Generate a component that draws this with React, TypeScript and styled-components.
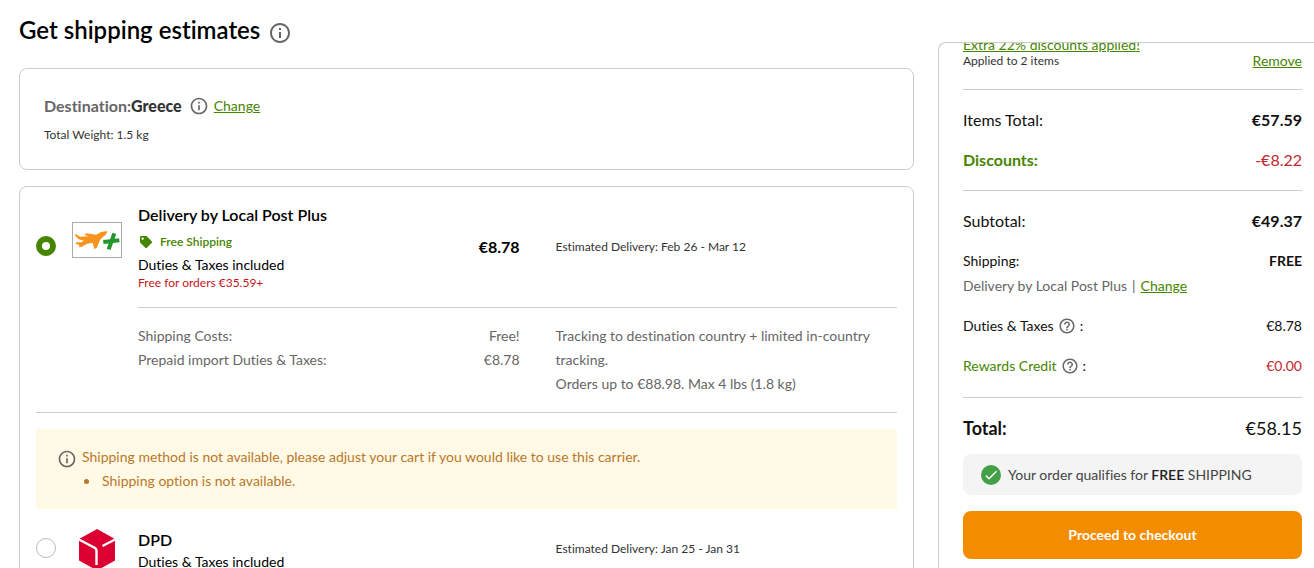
import React from "react";
import styled, { createGlobalStyle } from "styled-components";
import { MdInfoOutline, MdHelpOutline, MdCheck } from "react-icons/md";
import { FaTag } from "react-icons/fa";

const green = "#458500";
const line = "#cccccc";

const GlobalStyle = createGlobalStyle`
  *, *::before, *::after { box-sizing: border-box; }
  body {
    margin: 0;
    background: #fff;
    color: #111;
    font-family: Lato, "Liberation Sans", sans-serif;
    font-size: 14px;
    line-height: 20px;
    font-variant-ligatures: none;
  }
  h1, h2, p, ul, dl, dd, dt { margin: 0; padding: 0; font: inherit; font-variant-ligatures: none; }
`;

const Page = styled.div`
  display: grid;
  grid-template-columns: minmax(0, 1fr) 376px;
  gap: 24px;
  height: 100vh;
  padding-left: 19px;
  overflow: hidden;
`;

const Main = styled.main`
  display: flex;
  flex-direction: column;
  gap: 16px;
`;

const TitleBar = styled.header`
  display: flex;
  align-items: flex-end;
  gap: 8px;
  padding-bottom: 7px;
  height: 52px;
`;

const Title = styled.h1`
  && {
    font-size: 24px;
    line-height: 30px;
    font-weight: 600;
    color: #000;
  }
`;

const IconButton = styled.button<{ $size: number }>`
  display: inline-flex;
  flex: none;
  padding: 0;
  border: 0;
  background: none;
  color: #666;
  cursor: pointer;
  font-size: ${(p) => p.$size}px;
`;

const TextLink = styled.a`
  color: ${green};
  text-decoration: underline;
`;

const Card = styled.section`
  flex: none;
  border: 1px solid ${line};
  border-radius: 8px;
`;

const DestinationCard = styled(Card)`
  padding: 24px 24px 26px;
  display: flex;
  flex-direction: column;
  gap: 8px;
`;

const DestinationLine = styled.div`
  display: flex;
  align-items: center;
  line-height: 26px;
`;

const DestinationText = styled.p`
  && {
    font-size: 16px;
    font-weight: 700;
    color: #666;
    margin-right: 7px;
  }
  strong {
    color: #333;
  }
`;

const Change = styled(TextLink)`
  margin-left: 5px;
`;

const Small = styled.p`
  && {
    font-size: 12px;
    line-height: 16px;
    color: #333;
  }
`;

const MethodsCard = styled(Card)`
  padding: 15px 16px;
`;

const Method = styled.div`
  display: grid;
  grid-template-columns: 20px 16px 50px 16px minmax(0, 19fr) 36px minmax(0, 17fr);
  align-items: center;
`;

const Radio = styled.input`
  grid-column: 1;
  appearance: none;
  width: 20px;
  height: 20px;
  margin: 0 0 3px;
  border: 1px solid #bbb;
  border-radius: 50%;
  background: #fff;
  &:checked {
    border: 6px solid ${green};
  }
`;

const Logo = styled.span<{ $framed?: boolean }>`
  grid-column: 3;
  display: flex;
  justify-content: center;
  ${(p) => p.$framed && "border: 1px solid #aaa; margin-bottom: 14px;"}
`;

const Offer = styled.div`
  grid-column: 5;
  display: flex;
  justify-content: space-between;
  align-items: center;
`;

const Name = styled.label`
  display: block;
  font-size: 16px;
  line-height: 26px;
  font-weight: 600;
  color: #000;
`;

const FreeTag = styled.p`
  && {
    display: flex;
    align-items: center;
    gap: 8px;
    padding-left: 2px;
    font-size: 12px;
    line-height: 28px;
    font-weight: 600;
    color: ${green};
  }
`;

const Note = styled.p`
  && {
    line-height: 18px;
    color: #000;
  }
`;

const Threshold = styled.p`
  && {
    font-size: 12px;
    line-height: 18px;
    color: #c4161c;
  }
`;

const Price = styled.span`
  font-size: 16px;
  font-weight: 700;
  color: #000;
`;

const Estimate = styled(Small)`
  grid-column: 7;
`;

const Details = styled.div`
  display: grid;
  grid-template-columns: minmax(0, 19fr) minmax(0, 17fr);
  column-gap: 36px;
  margin: 15px 0 0 102px;
  padding: 16px 0;
  border-top: 1px solid ${line};
  color: #666;
  line-height: 24px;
`;

const Cost = styled.div`
  display: flex;
  justify-content: space-between;
`;

const Warning = styled.div`
  display: flex;
  margin-bottom: 18px;
  padding: 16px 21px;
  gap: 5px;
  background: #fff9e6;
  color: #b8782a;
  line-height: 24px;
  svg { color: #666; flex: none; font-size: 20px; margin-top: 4px; }
  ul { padding-left: 18px; }
  li { padding-left: 2px; }
`;

const Divider = styled.hr`
  margin: 0 0 16px;
  border: 0;
  border-top: 1px solid ${line};
`;

const Summary = styled.aside`
  margin-top: 42px;
  padding: 0 12px 0 24px;
  border: 1px solid ${line};
  border-width: 1px 0 0 1px;
  border-top-left-radius: 8px;
  overflow: hidden;
`;

const Promo = styled.div`
  display: flex;
  justify-content: space-between;
  align-items: flex-end;
  margin-top: -6px;
  padding-bottom: 20px;
  line-height: 16px;
`;

const Rows = styled.dl`
  && {
    display: flex;
    flex-direction: column;
    gap: 20px;
    padding: 20px 0;
    border-top: 1px solid ${line};
  }
`;

const Row = styled.div<{ $size?: number }>`
  display: flex;
  justify-content: space-between;
  font-size: ${(p) => p.$size ?? 14}px;
`;

const Label = styled.dt<{ $color?: string; $weight?: number }>`
  && {
    display: flex;
    align-items: center;
    gap: 4px;
    color: ${(p) => p.$color ?? "#111"};
    font-weight: ${(p) => p.$weight ?? 400};
  }
`;

const Value = styled.dd<{ $color?: string; $weight?: number }>`
  && {
    color: ${(p) => p.$color ?? "#111"};
    font-weight: ${(p) => p.$weight ?? 400};
  }
`;

const Colon = styled.span`
  color: #111;
`;

const Carrier = styled.dd`
  && {
    display: flex;
    gap: 5px;
    margin-top: 5px;
    color: #666;
  }
`;

const Totals = styled(Rows)`
  && {
    margin-top: 1px;
    padding-bottom: 16px;
  }
`;

const Qualifies = styled.p`
  && {
    display: flex;
    align-items: center;
    gap: 7px;
    margin-bottom: 16px;
    padding: 0 18px;
    min-height: 41px;
    border-radius: 8px;
    background: #f4f4f4;
    color: #444;
  }
  strong { font-weight: 600; color: #222; }
`;

const CheckBadge = styled.span`
  display: flex;
  align-items: center;
  justify-content: center;
  width: 20px;
  height: 20px;
  border-radius: 50%;
  background: #43a047;
  color: #fff;
  font-size: 16px;
`;

const Checkout = styled.button`
  display: block;
  width: 100%;
  height: 48px;
  border: 0;
  border-radius: 8px;
  background: #f48c00;
  color: #fff;
  font: 700 14px/20px Lato, "Liberation Sans", sans-serif;
  cursor: pointer;
`;

const PlaneLogo = () => (
  <svg width="48" height="34" viewBox="3 3 144 102" aria-hidden="true">
    <path
      fill="#f7941d"
      d="M7 38 L13 37 L24 44 L50 43 L36 38 L44 34 L72 38 Q90 26 106 28 Q105 37 92 46 L84 54 L74 78 L67 81 L62 62 L44 66 L28 75 L21 76 L22 69 L10 65 L13 61 L28 61 L36 56 L20 52Z"
    />
    <path stroke="#23962c" strokeWidth="12" fill="none" d="M127 34 L110 82 M94 60 L142 55" />
  </svg>
);

const DpdLogo = () => (
  <svg width="38" height="44" viewBox="0 0 38 44" aria-hidden="true">
    <path fill="#dc0032" d="M19 2 L37 12 V33.500 L19 43.500 L1 33.500 V12Z" />
    <path stroke="#fff" strokeWidth="2.400" fill="none" d="M0 12 L17 21 Q18.500 22 18.500 23.500 V38 M38 12 L24.500 19" />
  </svg>
);

export default function App() {
  return (
    <>
      <GlobalStyle />
      <Page>
        <Main>
          <TitleBar>
            <Title>Get shipping estimates</Title>
            <IconButton $size={24} aria-label="About shipping estimates">
              <MdInfoOutline />
            </IconButton>
          </TitleBar>

          <DestinationCard>
            <DestinationLine>
              <DestinationText>
                Destination:<strong>Greece</strong>
              </DestinationText>
              <IconButton $size={20} aria-label="About the destination">
                <MdInfoOutline />
              </IconButton>
              <Change href="#destination">Change</Change>
            </DestinationLine>
            <Small>Total Weight: 1.5 kg</Small>
          </DestinationCard>

          <MethodsCard>
            <Method>
              <Radio type="radio" name="carrier" id="local-post" defaultChecked />
              <Logo $framed>
                <PlaneLogo />
              </Logo>
              <Offer>
                <div>
                  <Name htmlFor="local-post">Delivery by Local Post Plus</Name>
                  <FreeTag>
                    <FaTag />
                    Free Shipping
                  </FreeTag>
                  <Note>Duties &amp; Taxes included</Note>
                  <Threshold>Free for orders €35.59+</Threshold>
                </div>
                <Price>€8.78</Price>
              </Offer>
              <Estimate>Estimated Delivery: Feb 26 - Mar 12</Estimate>
            </Method>
            <Details>
              <div>
                <Cost>
                  <span>Shipping Costs:</span>
                  <span>Free!</span>
                </Cost>
                <Cost>
                  <span>Prepaid import Duties &amp; Taxes:</span>
                  <span>€8.78</span>
                </Cost>
              </div>
              <div>
                <p>Tracking to destination country + limited in-country tracking.</p>
                <p>Orders up to €88.98. Max 4 lbs (1.8 kg)</p>
              </div>
            </Details>
            <Divider />
            <Warning>
              <MdInfoOutline />
              <div>
                <p>Shipping method is not available, please adjust your cart if you would like to use this carrier.</p>
                <ul>
                  <li>Shipping option is not available.</li>
                </ul>
              </div>
            </Warning>
            <Method>
              <Radio type="radio" name="carrier" id="dpd" />
              <Logo>
                <DpdLogo />
              </Logo>
              <Offer>
                <div>
                  <Name htmlFor="dpd">DPD</Name>
                  <Note>Duties &amp; Taxes included</Note>
                </div>
              </Offer>
              <Estimate>Estimated Delivery: Jan 25 - Jan 31</Estimate>
            </Method>
          </MethodsCard>
        </Main>

        <Summary>
          <Promo>
            <div>
              <TextLink href="#discounts">Extra 22% discounts applied!</TextLink>
              <Small>Applied to 2 items</Small>
            </div>
            <TextLink href="#remove">Remove</TextLink>
          </Promo>
          <Rows>
            <Row $size={16}>
              <Label>Items Total:</Label>
              <Value $weight={700}>€57.59</Value>
            </Row>
            <Row $size={16}>
              <Label $color={green} $weight={700}>Discounts:</Label>
              <Value $color="#c1272d">-€8.22</Value>
            </Row>
          </Rows>
          <Rows>
            <Row $size={16}>
              <Label>Subtotal:</Label>
              <Value $weight={700}>€49.37</Value>
            </Row>
            <div>
              <Row>
                <Label>Shipping:</Label>
                <Value $weight={700}>FREE</Value>
              </Row>
              <Carrier>
                <span>Delivery by Local Post Plus</span>
                <span>|</span>
                <TextLink href="#shipping">Change</TextLink>
              </Carrier>
            </div>
            <Row>
              <Label>
                Duties &amp; Taxes
                <IconButton $size={18} aria-label="About duties and taxes">
                  <MdHelpOutline />
                </IconButton>
                <Colon>:</Colon>
              </Label>
              <Value>€8.78</Value>
            </Row>
            <Row>
              <Label $color={green}>
                Rewards Credit
                <IconButton $size={18} aria-label="About rewards credit">
                  <MdHelpOutline />
                </IconButton>
                <Colon>:</Colon>
              </Label>
              <Value $color="#c1272d">€0.00</Value>
            </Row>
          </Rows>
          <Totals>
            <Row $size={18}>
              <Label $weight={700}>Total:</Label>
              <Value>€58.15</Value>
            </Row>
          </Totals>
          <Qualifies>
            <CheckBadge>
              <MdCheck />
            </CheckBadge>
            <span>
              Your order qualifies for <strong>FREE</strong> SHIPPING
            </span>
          </Qualifies>
          <Checkout>Proceed to checkout</Checkout>
        </Summary>
      </Page>
    </>
  );
}
